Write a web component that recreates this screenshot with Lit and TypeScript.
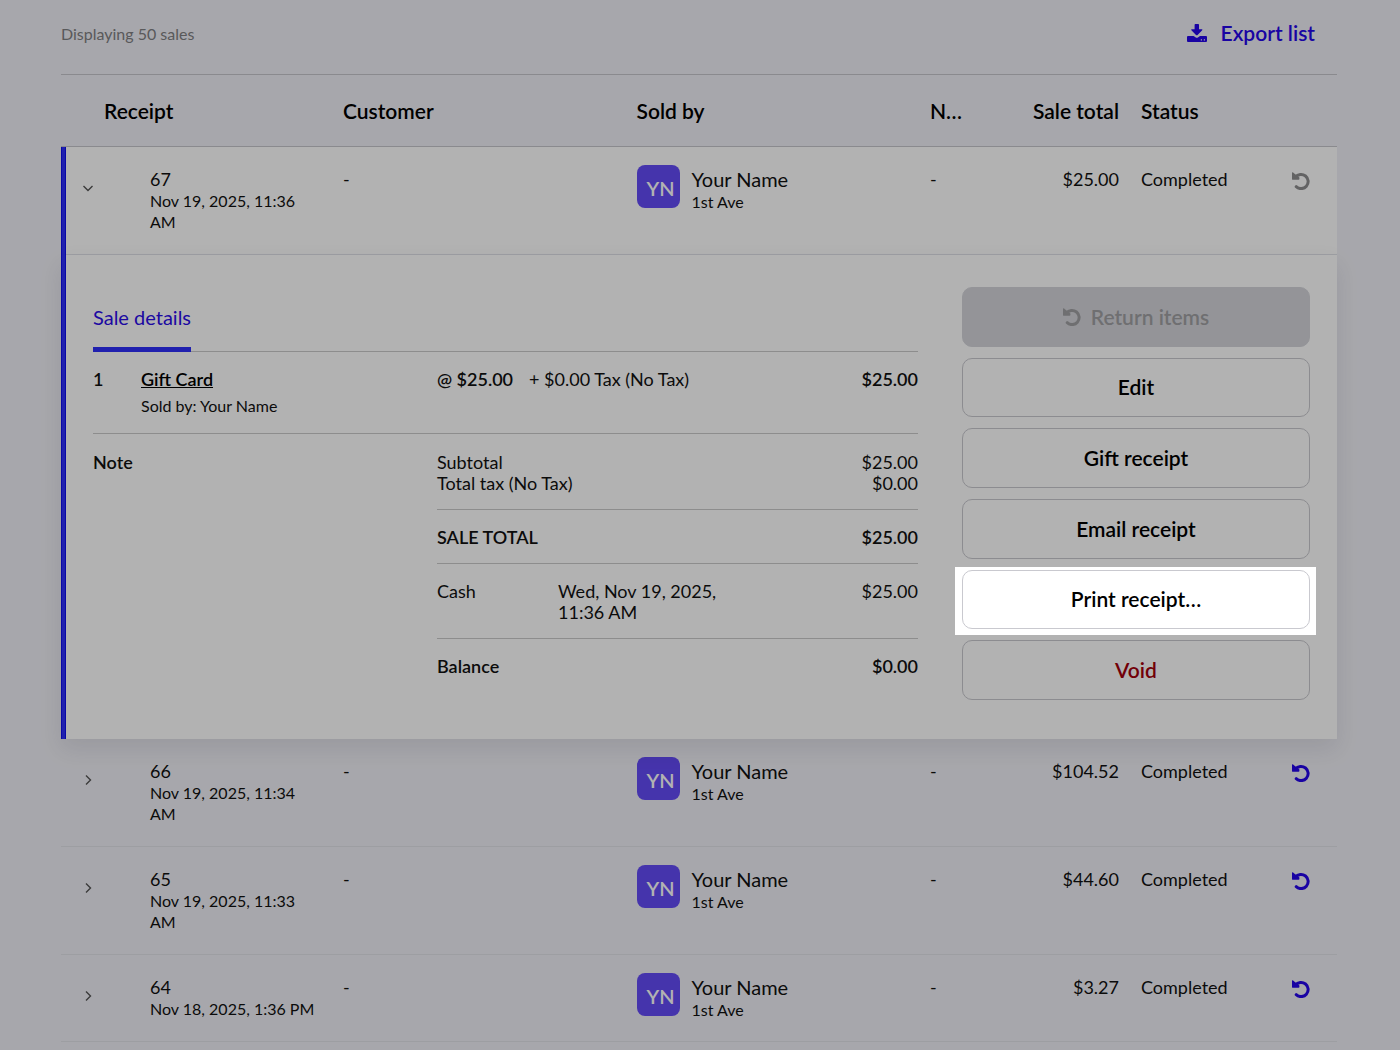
import { LitElement, html, css, svg, nothing } from "lit";
import { customElement, property, state } from "lit/decorators.js";

interface Sale {
  id: number;
  date: string;
  total: string;
  returnable: boolean;
}

const SALES: Sale[] = [
  { id: 67, date: "Nov 19, 2025, 11:36 AM", total: "$25.00", returnable: false },
  { id: 66, date: "Nov 19, 2025, 11:34 AM", total: "$104.52", returnable: true },
  { id: 65, date: "Nov 19, 2025, 11:33 AM", total: "$44.60", returnable: true },
  { id: 64, date: "Nov 18, 2025, 1:36 PM", total: "$3.27", returnable: true },
];

const undoIcon = svg`<svg class="icon" viewBox="0 0 18 18" width="18" height="18" aria-hidden="true">
  <path d="M3.4 5.2A7.1 7.1 0 1 1 4.2 14.7" fill="none" stroke="currentColor" stroke-width="3" stroke-linecap="round"/>
  <path d="M0 1Q0 0 .8 .2L2.6 1.8L7.4 5.4V7Q7.4 7.8 6.6 7.8H.9Q0 7.8 0 6.9Z" fill="currentColor"/>
</svg>`;

const chevron = (open: boolean) => svg`<svg class="icon" viewBox="0 0 12 12" width="12" height="12" aria-hidden="true">
  <path d=${open ? "M1.5 4L6 8.5L10.5 4" : "M4 1.5L8.5 6L4 10.5"} fill="none" stroke="currentColor" stroke-width="1.4"/>
</svg>`;

const downloadIcon = svg`<svg class="icon" viewBox="0 0 20 18" width="20" height="18" aria-hidden="true">
  <path d="M7.6 0.8Q7.6 0 8.4 0H11.2Q12 0 12 .8V5.2H14.8Q15.9 5.3 15.2 6.2L10.6 10.9Q9.8 11.5 9 10.9L4.4 6.2Q3.7 5.3 4.8 5.2H7.6Z" fill="currentColor"/>
  <path fill-rule="evenodd" d="M1 12H6.6L8.4 13.3Q9.8 14.3 11.2 13.3L13 12H19Q20 12 20 13V17Q20 18 19 18H1Q0 18 0 17V13Q0 12 1 12ZM13.8 15.2V16.4H15V15.2ZM16.8 15.2V16.4H18V15.2Z" fill="currentColor"/>
</svg>`;

@customElement("sale-details")
export class SaleDetails extends LitElement {
  static styles = css`
    :host {
      display: grid;
      grid-template-columns: minmax(0, 1fr) 348px;
      column-gap: 44px;
      padding: 32px 27px 39px 32px;
    }
    .tabs {
      display: flex;
      border-bottom: 1px solid #cacaca;
    }
    .tab {
      margin: 0 0 -1px;
      padding: 0;
      height: 65px;
      border: 0;
      border-bottom: 5px solid #2f2ffa;
      background: none;
      color: #2a0ce8;
      font: 400 20px/24px Lato, sans-serif;
    }
    table {
      width: 100%;
      border-collapse: collapse;
      table-layout: fixed;
    }
    td,
    th {
      padding: 0;
      vertical-align: top;
      text-align: left;
      font-weight: 400;
    }
    .items td {
      padding: 17px 0;
      border-bottom: 1px solid #cacaca;
    }
    .col-qty { width: 48px; }
    .col-item { width: 296px; }
    .col-amount { width: 100px; }
    .col-label { width: 121px; }
    .col-date { width: 180px; }
    .strong,
    .totals .strong { font-weight: 600; }
    .amount { text-align: right; }
    .link {
      color: #000;
      font-weight: 600;
    }
    .seller {
      padding-top: 5px;
      font-size: 16px;
    }
    .tax { margin-left: 16px; }
    .summary {
      display: grid;
      grid-template-columns: 344px minmax(0, 1fr);
    }
    .note {
      margin: 0;
      padding-top: 18px;
      font: inherit;
      font-weight: 600;
    }
    .totals tr.start > * { padding-top: 17px; }
    .totals tr.first > * { padding-top: 18px; }
    .totals tr.end > * { padding-bottom: 15px; }
    .totals tr.rule > * { border-bottom: 1px solid #cacaca; }
    .totals tr.last > * { padding-bottom: 23px; }
    .actions {
      display: grid;
      grid-auto-rows: 1fr;
      gap: 11px;
    }
    .action {
      display: flex;
      align-items: center;
      justify-content: center;
      gap: 10px;
      border: 1px solid #c9c9cf;
      border-radius: 10px;
      background: #fff;
      color: #000;
      font: 600 21px/24px Lato, sans-serif;
    }
    .action:disabled {
      border-color: #d4d5da;
      background: #d4d5da;
      color: #a0a0a3;
    }
    .danger { color: #a4000c; }
    .spotlit { position: relative; }
    .spotlit::after {
      content: "";
      position: absolute;
      inset: -4px -7px -7px -8px;
      box-shadow: 0 0 0 300vmax rgba(0, 0, 0, 0.3);
      pointer-events: none;
    }
  `;

  render() {
    return html`
      <div>
        <div class="tabs" role="tablist">
          <button class="tab" role="tab" aria-selected="true">Sale details</button>
        </div>
        <table class="items">
          <colgroup><col class="col-qty" /><col class="col-item" /><col /><col class="col-amount" /></colgroup>
          <tbody>
            <tr>
              <td class="strong">1</td>
              <td>
                <a class="link" href="#gift-card">Gift Card</a>
                <div class="seller">Sold by: Your Name</div>
              </td>
              <td><span class="strong">@ $25.00</span><span class="tax">+ $0.00 Tax (No Tax)</span></td>
              <td class="amount strong">$25.00</td>
            </tr>
          </tbody>
        </table>
        <div class="summary">
          <h2 class="note">Note</h2>
          <table class="totals">
            <colgroup><col class="col-label" /><col class="col-date" /><col /></colgroup>
            <tbody>
              <tr class="start first"><th colspan="2" scope="row">Subtotal</th><td class="amount">$25.00</td></tr>
              <tr class="end rule"><th colspan="2" scope="row">Total tax (No Tax)</th><td class="amount">$0.00</td></tr>
              <tr class="start end rule"><th class="strong" colspan="2" scope="row">SALE TOTAL</th><td class="amount strong">$25.00</td></tr>
              <tr class="start end rule"><th scope="row">Cash</th><td>Wed, Nov 19, 2025, 11:36 AM</td><td class="amount">$25.00</td></tr>
              <tr class="start last"><th class="strong" colspan="2" scope="row">Balance</th><td class="amount strong">$0.00</td></tr>
            </tbody>
          </table>
        </div>
      </div>
      <div class="actions">
        <button class="action" disabled>${undoIcon}Return items</button>
        <button class="action">Edit</button>
        <button class="action">Gift receipt</button>
        <button class="action">Email receipt</button>
        <button class="action spotlit">Print receipt…</button>
        <button class="action danger">Void</button>
      </div>
    `;
  }
}

@customElement("user-badge")
export class UserBadge extends LitElement {
  static styles = css`
    :host {
      display: flex;
      gap: 12px;
    }
    .avatar {
      display: flex;
      align-items: center;
      justify-content: center;
      box-sizing: border-box;
      width: 43px;
      height: 43px;
      padding: 3px 0 0 5px;
      border-radius: 8px;
      background: #644bf6;
      color: #fff;
      font: 600 20px/24px Lato, sans-serif;
    }
    .name {
      padding-top: 2px;
      font-size: 20px;
      line-height: 24px;
    }
    .outlet {
      font-size: 16px;
      line-height: 21px;
    }
  `;
  @property() name = "";
  @property() outlet = "";

  render() {
    const initials = this.name.split(" ").map((w) => w[0]).join("");
    return html`
      <div class="avatar">${initials}</div>
      <div>
        <div class="name">${this.name}</div>
        <div class="outlet">${this.outlet}</div>
      </div>
    `;
  }
}

@customElement("app-root")
export class AppRoot extends LitElement {
  static styles = css`
    :host {
      display: block;
      box-sizing: border-box;
      min-height: 100vh;
      overflow: hidden;
      padding: 0 63px 0 61px;
      background: #f0f0f6;
      color: #111;
      font: 400 18px/21px Lato, sans-serif;
    }
    .bar {
      display: flex;
      align-items: center;
      justify-content: space-between;
      height: 66px;
      padding: 0 22px 8px 0;
      border-bottom: 1px solid #c6c6cc;
    }
    .count {
      color: #808083;
      font-size: 16px;
    }
    .export {
      display: flex;
      align-items: center;
      gap: 14px;
      padding: 0;
      border: 0;
      background: none;
      color: #2405ea;
      font: 600 21px/24px Lato, sans-serif;
    }
    .icon { display: block; }
    .sales {
      width: 100%;
      border-collapse: separate;
      border-spacing: 0;
      table-layout: fixed;
    }
    .sales th {
      height: 71px;
      padding: 0;
      border-bottom: 1px solid #c6c6cc;
      color: #000;
      font-size: 21px;
      line-height: 24px;
      font-weight: 600;
      text-align: left;
    }
    .sales td {
      padding: 22px 0;
      border-bottom: 1px solid #e1e3e9;
      vertical-align: top;
    }
    .col-toggle { width: 43px; }
    .col-receipt { width: 239px; }
    .col-note { width: 92px; }
    .col-total { width: 119px; }
    .col-status { width: 130px; }
    .col-action { width: 66px; }
    .sales .total {
      padding-right: 22px;
      text-align: right;
    }
    .sales td.receipt { padding: 22px 22px 22px 46px; }
    .date { font-size: 16px; }
    .sales td.seller { padding: 18px 0 0; }
    .sales td.toggle { padding: 35px 0 0 21px; }
    .sales td.action { padding: 25px 27px 0 0; }
    .icon-button {
      display: block;
      padding: 0;
      border: 0;
      background: none;
      color: #2405ea;
    }
    .action .icon-button { margin-left: auto; }
    .icon-button:disabled { color: #8e8e90; }
    .toggle .icon-button { color: #555; }
    .open td { background-color: #fff; }
    .open td:first-child {
      border-bottom-color: transparent;
      background:
        linear-gradient(90deg, #0c0cf0 1px, #2f2ffa 1px 4px, #0c0cf0 4px) 0 0 / 5px 100% no-repeat border-box,
        linear-gradient(#e1e3e9, #e1e3e9) 0 100% / 100% 1px no-repeat border-box,
        #fff;
    }
    .sales td.panel {
      position: relative;
      z-index: 1;
      padding: 0;
      border: 0;
      background: #fff linear-gradient(90deg, #0c0cf0 1px, #2f2ffa 1px 4px, #0c0cf0 4px) 0 0 / 5px 100% no-repeat;
      box-shadow: 0 10px 22px rgba(40, 40, 70, 0.1);
    }
  `;

  @state() private openId = 67;

  private toggle(id: number) {
    this.openId = this.openId === id ? 0 : id;
  }

  private row(sale: Sale) {
    const open = sale.id === this.openId;
    return html`
      <tr class=${open ? "open" : "closed"}>
        <td class="toggle">
          <button class="icon-button" aria-label="Toggle sale ${sale.id}" aria-expanded=${open} @click=${() => this.toggle(sale.id)}>
            ${chevron(open)}
          </button>
        </td>
        <td class="receipt">
          <div>${sale.id}</div>
          <div class="date">${sale.date}</div>
        </td>
        <td>-</td>
        <td class="seller"><user-badge name="Your Name" outlet="1st Ave"></user-badge></td>
        <td>-</td>
        <td class="total">${sale.total}</td>
        <td>Completed</td>
        <td class="action">
          <button class="icon-button" aria-label="Return items" ?disabled=${!sale.returnable}>${undoIcon}</button>
        </td>
      </tr>
      ${open ? html`<tr><td class="panel" colspan="8"><sale-details></sale-details></td></tr>` : nothing}
    `;
  }

  render() {
    return html`
      <div class="bar">
        <span class="count">Displaying 50 sales</span>
        <button class="export">${downloadIcon}Export list</button>
      </div>
      <table class="sales">
        <colgroup>
          <col class="col-toggle" /><col class="col-receipt" /><col /><col />
          <col class="col-note" /><col class="col-total" /><col class="col-status" /><col class="col-action" />
        </colgroup>
        <thead>
          <tr>
            <th></th>
            <th scope="col">Receipt</th>
            <th scope="col">Customer</th>
            <th scope="col">Sold by</th>
            <th scope="col">N…</th>
            <th class="total" scope="col">Sale total</th>
            <th scope="col">Status</th>
            <th></th>
          </tr>
        </thead>
        <tbody>
          ${SALES.map((sale) => this.row(sale))}
        </tbody>
      </table>
    `;
  }
}
